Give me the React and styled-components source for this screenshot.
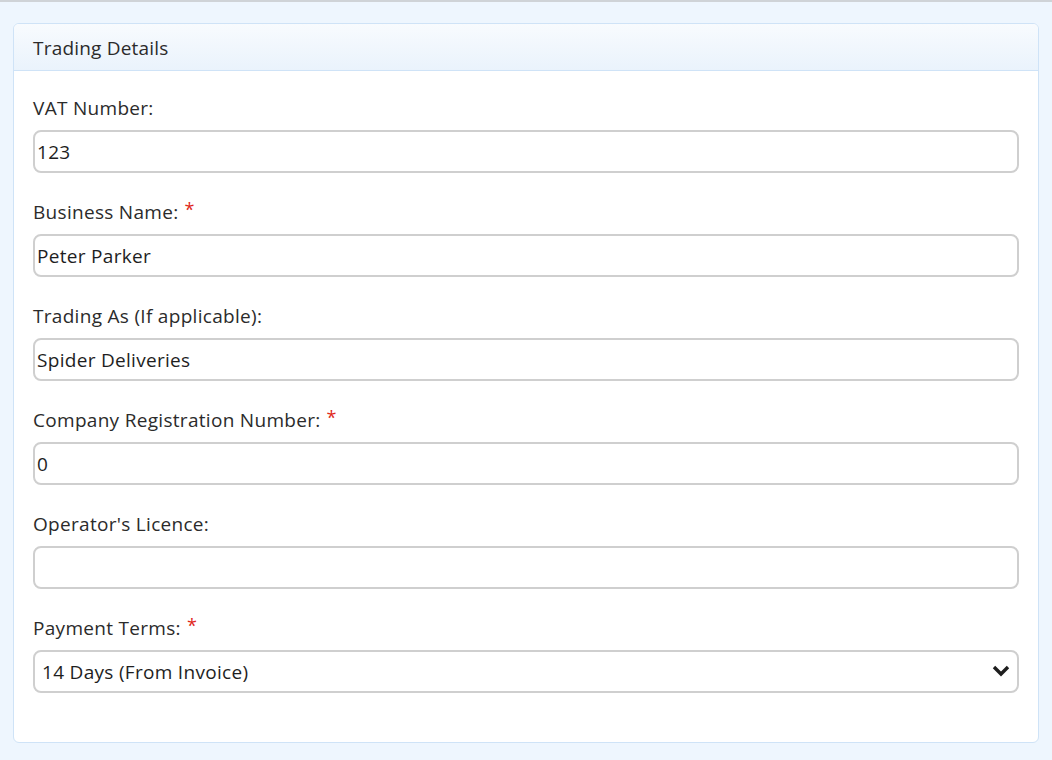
import React from "react";
import styled, { createGlobalStyle } from "styled-components";

const Global = createGlobalStyle`
  body {
    margin: 0;
    background: #eef6fe;
    font-family: "Open Sans", "Liberation Sans", Arial, sans-serif;
  }
`;

const Page = styled.div`
  border-top: 2px solid #cfd3d7;
  padding: 21px 13px 14px 13px;
  min-height: 760px;
  box-sizing: border-box;
`;

const Panel = styled.div`
  background: #fff;
  border: 1px solid #cfe3f7;
  border-radius: 6px;
  overflow: hidden;
`;

const Header = styled.div`
  height: 47px;
  display: flex;
  align-items: center;
  padding: 1px 19px 0 19px;
  box-sizing: border-box;
  background: linear-gradient(#f8fbfe, #eaf3fc);
  border-bottom: 1px solid #cfe3f7;
  font-size: 19px;
  letter-spacing: 0.2px;
  color: #2b2b2b;
`;

const Body = styled.div`
  padding: 26px 19px 49px 19px;
`;

const Field = styled.div`
  margin-bottom: 28px;
  &:last-child { margin-bottom: 0; }
`;

const Label = styled.label`
  display: block;
  height: 22px;
  line-height: 22px;
  font-size: 19px;
  letter-spacing: 0.3px;
  color: #2b2b2b;
  margin-bottom: 11px;
`;

const Star = styled.span`
  color: #e0281b;
  font-size: 18px;
  vertical-align: top;
  margin-left: 6px;
  line-height: 16px;
`;

const Input = styled.input`
  display: block;
  width: 100%;
  box-sizing: border-box;
  height: 43px;
  border: 2px solid #cfcfcf;
  border-radius: 8px;
  padding: 0 2px;
  font: inherit;
  font-size: 19px;
  letter-spacing: 0.3px;
  color: #1e1e1e;
  outline: none;
`;

const SelectWrap = styled.div`
  position: relative;
`;

const Select = styled.select`
  appearance: none;
  display: block;
  width: 100%;
  box-sizing: border-box;
  height: 43px;
  border: 2px solid #cfcfcf;
  border-radius: 8px;
  padding: 0 7px;
  font: inherit;
  font-size: 19px;
  letter-spacing: 0.3px;
  color: #1e1e1e;
  background: #fff;
  outline: none;
`;

const Chevron = styled.svg`
  position: absolute;
  right: 8px;
  top: 14px;
  pointer-events: none;
`;

const fields = [
  { label: "VAT Number:", value: "123" },
  { label: "Business Name:", value: "Peter Parker", req: true },
  { label: "Trading As (If applicable):", value: "Spider Deliveries" },
  { label: "Company Registration Number:", value: "0", req: true },
  { label: "Operator's Licence:", value: "" },
];

export default function App() {
  return (
    <Page>
      <Global />
      <Panel>
        <Header>Trading Details</Header>
        <Body>
          {fields.map((f) => (
            <Field key={f.label}>
              <Label>
                {f.label}
                {f.req && <Star>*</Star>}
              </Label>
              <Input defaultValue={f.value} />
            </Field>
          ))}
          <Field>
            <Label>
              Payment Terms:<Star>*</Star>
            </Label>
            <SelectWrap>
              <Select defaultValue="14">
                <option value="14">14 Days (From Invoice)</option>
                <option value="30">30 Days (From Invoice)</option>
              </Select>
              <Chevron width="20" height="14" viewBox="0 0 20 14">
                <path d="M3 3 L10 10 L17 3" fill="none" stroke="#1e1e1e" strokeWidth="3.4" />
              </Chevron>
            </SelectWrap>
          </Field>
        </Body>
      </Panel>
    </Page>
  );
}
